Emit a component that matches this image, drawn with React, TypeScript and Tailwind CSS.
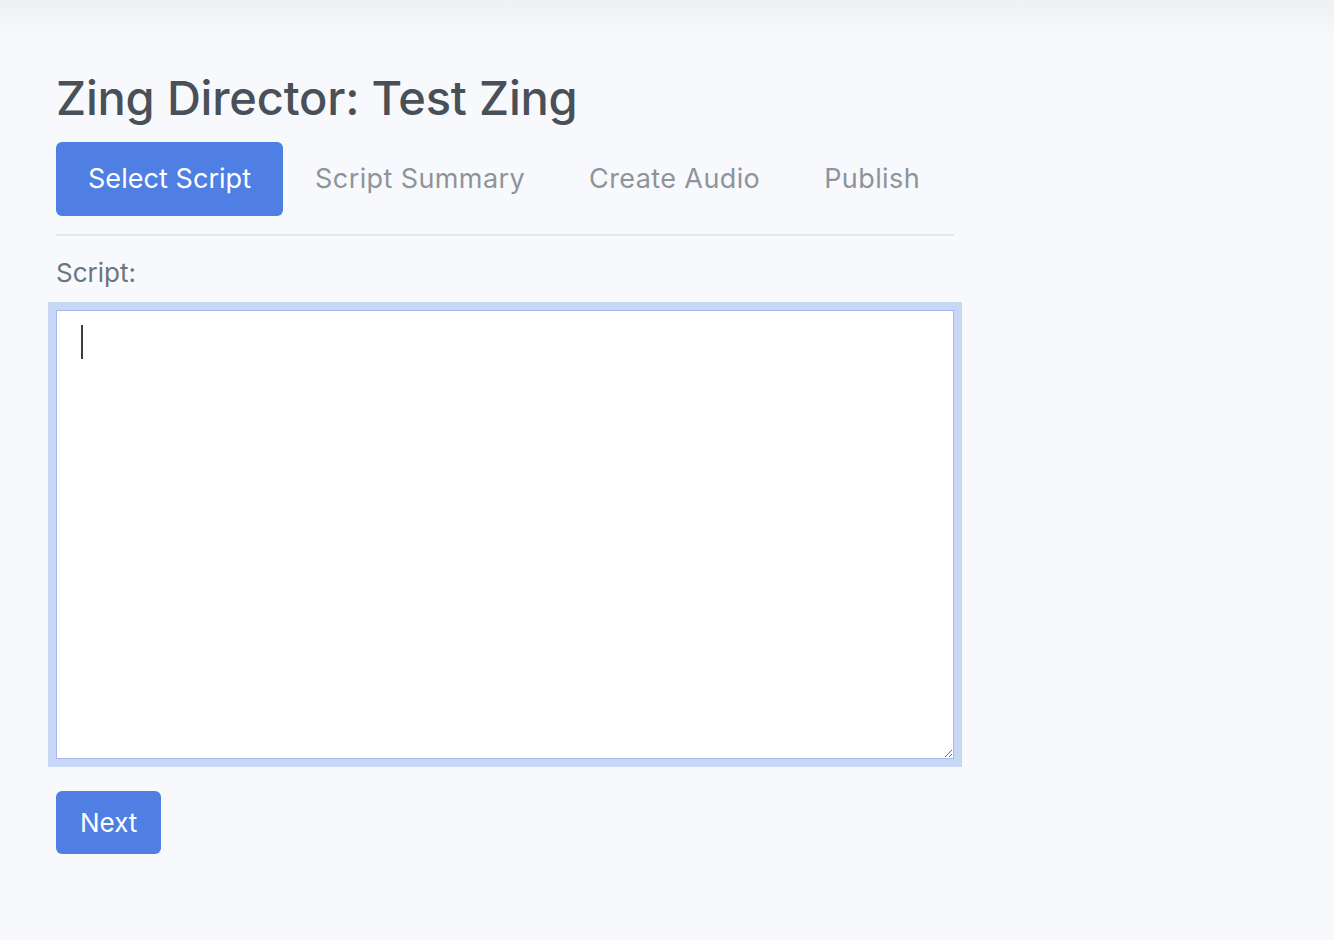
export default function App() {
  const tabs = ["Select Script", "Script Summary", "Create Audio", "Publish"];

  return (
    <div
      className="min-h-[940px] w-full bg-[#f8f9fc] text-[#495057]"
      style={{ fontFamily: "Inter, 'Noto Sans', sans-serif" }}
    >
      <div className="h-10 w-full bg-gradient-to-b from-[#eef0f4] to-[#f8f9fc]" />
      <div className="ml-14 w-[898px]">
        <h1 className="mt-[30px] text-[47px] font-medium leading-[56px] tracking-[-0.2px] text-[#495057]">
          Zing Director: Test Zing
        </h1>

        <div className="mt-[16px] flex border-b-2 border-[#e3e7ec] pb-[18px]">
          {tabs.map((tab, i) => (
            <button
              key={tab}
              className={
                i === 0
                  ? "h-[74px] shrink-0 whitespace-nowrap rounded-md bg-[#4f7fe3] px-8 text-[27px] tracking-[0.05px] text-white"
                  : "h-[74px] shrink-0 whitespace-nowrap px-8 text-[27px] tracking-[0.4px] text-[#8e949a]"
              }
            >
              {tab}
            </button>
          ))}
        </div>

        <label className="mt-[22px] block text-[26px] leading-[30px] text-[#6c757d]">
          Script:
        </label>

        <div className="relative mt-[14px] -ml-2 w-[914px] bg-[#c7d7f5] p-2">
          <textarea className="block h-[449px] w-full resize-y border border-[#a3baf0] bg-white px-6 py-3 text-[24px] text-[#495057] outline-none" />
          <span className="absolute left-[33px] top-[23px] h-[34px] w-[2px] bg-[#3a3f44]" />
        </div>

        <button className="mt-6 h-[63px] rounded-md bg-[#4f7fe3] px-6 text-[26px] text-white">
          Next
        </button>
      </div>
    </div>
  );
}
